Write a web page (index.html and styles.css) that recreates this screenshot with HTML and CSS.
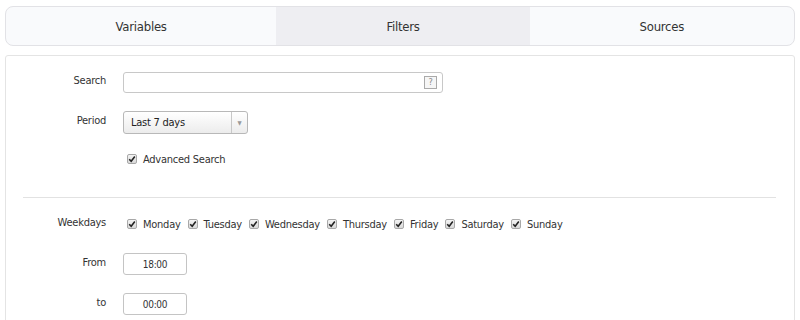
FILE: index.html
```html
<!DOCTYPE html>
<html lang="en">
<head>
    <meta charset="UTF-8">
    <title>Filters</title>
    <link rel="stylesheet" href="styles.css">
</head>
<body>
    <div class="tabs">
        <div class="tab tab-vars">Variables</div>
        <div class="tab tab-filters active">Filters</div>
        <div class="tab tab-sources">Sources</div>
    </div>
    <div class="panel">
        <div class="row">
            <label class="lbl">Search</label>
            <div class="search-box">
                <input type="text" class="search-input">
                <span class="help">?</span>
            </div>
        </div>
        <div class="row">
            <label class="lbl">Period</label>
            <div class="select">
                <span class="select-text">Last 7 days</span>
                <span class="select-arrow">&#9660;</span>
            </div>
        </div>
        <div class="row row-short">
            <span class="lbl"></span>
            <div class="days">
                <span class="check-item"><span class="cb"><svg width="8" height="8" viewBox="0 0 8 8"><path d="M1.2 4.2 L3.2 6.2 L6.8 1.6" fill="none" stroke="#222" stroke-width="1.6"/></svg></span>Advanced Search</span>
            </div>
        </div>
        <hr class="divider">
        <div class="row">
            <label class="lbl">Weekdays</label>
            <div class="days">
                <span class="check-item"><span class="cb"><svg width="8" height="8" viewBox="0 0 8 8"><path d="M1.2 4.2 L3.2 6.2 L6.8 1.6" fill="none" stroke="#222" stroke-width="1.6"/></svg></span>Monday</span>
                <span class="check-item"><span class="cb"><svg width="8" height="8" viewBox="0 0 8 8"><path d="M1.2 4.2 L3.2 6.2 L6.8 1.6" fill="none" stroke="#222" stroke-width="1.6"/></svg></span>Tuesday</span>
                <span class="check-item"><span class="cb"><svg width="8" height="8" viewBox="0 0 8 8"><path d="M1.2 4.2 L3.2 6.2 L6.8 1.6" fill="none" stroke="#222" stroke-width="1.6"/></svg></span>Wednesday</span>
                <span class="check-item"><span class="cb"><svg width="8" height="8" viewBox="0 0 8 8"><path d="M1.2 4.2 L3.2 6.2 L6.8 1.6" fill="none" stroke="#222" stroke-width="1.6"/></svg></span>Thursday</span>
                <span class="check-item"><span class="cb"><svg width="8" height="8" viewBox="0 0 8 8"><path d="M1.2 4.2 L3.2 6.2 L6.8 1.6" fill="none" stroke="#222" stroke-width="1.6"/></svg></span>Friday</span>
                <span class="check-item"><span class="cb"><svg width="8" height="8" viewBox="0 0 8 8"><path d="M1.2 4.2 L3.2 6.2 L6.8 1.6" fill="none" stroke="#222" stroke-width="1.6"/></svg></span>Saturday</span>
                <span class="check-item"><span class="cb"><svg width="8" height="8" viewBox="0 0 8 8"><path d="M1.2 4.2 L3.2 6.2 L6.8 1.6" fill="none" stroke="#222" stroke-width="1.6"/></svg></span>Sunday</span>
            </div>
        </div>
        <div class="row">
            <label class="lbl">From</label>
            <input type="text" class="time" value="18:00">
        </div>
        <div class="row">
            <label class="lbl">to</label>
            <input type="text" class="time" value="00:00">
        </div>
    </div>
</body>
</html>
```

FILE: styles.css
```css
body {
    margin: 0;
    padding: 6px 5px 0 5px;
    background: #fff;
    font-family: 'DejaVu Sans Condensed', 'Liberation Sans', sans-serif;
    letter-spacing: -0.25px;
    color: #333;
    overflow: hidden;
}
.tabs {
    display: flex;
    height: 38px;
    border: 1px solid #e2e2e6;
    border-radius: 8px;
    overflow: hidden;
    background: #f9fafc;
}
.tab {
    display: flex;
    align-items: center;
    justify-content: center;
    font-size: 13px;
    color: #333;
}
.tab-vars { flex: 271; }
.tab-filters { flex: 254; }
.tab-sources { flex: 265; }
.tab.active {
    background: #eeeef2;
}
.panel {
    margin-top: 9px;
    border: 1px solid #e4e4e4;
    border-radius: 3px;
    padding-top: 6px;
    height: 300px;
}
.row {
    display: flex;
    align-items: center;
    height: 40px;
}
.row-short {
    height: 34px;
}
.lbl {
    width: 100px;
    text-align: right;
    margin-right: 17px;
    padding-bottom: 4px;
    font-size: 11px;
    color: #333;
    flex-shrink: 0;
}
.search-box {
    position: relative;
    width: 320px;
    height: 21px;
}
.search-input {
    box-sizing: border-box;
    width: 100%;
    height: 100%;
    border: 1px solid #c8c8c8;
    border-radius: 3px;
    margin: 0;
    padding: 0 20px 0 4px;
}
.help {
    position: absolute;
    right: 6px;
    top: 4px;
    width: 11px;
    height: 11px;
    border: 1px solid #aaa;
    font-size: 9px;
    line-height: 11px;
    text-align: center;
    color: #888;
    background: #f6f6f6;
}
.select {
    box-sizing: border-box;
    display: flex;
    width: 125px;
    height: 23px;
    border: 1px solid #b8b8b8;
    border-radius: 3px;
    background: linear-gradient(#ffffff, #ececec);
}
.select-text {
    flex: 1;
    font-size: 11px;
    line-height: 21px;
    padding-left: 7px;
    color: #222;
}
.select-arrow {
    width: 15px;
    border-left: 1px solid #c8c8c8;
    font-size: 6px;
    line-height: 21px;
    text-align: center;
    color: #999;
}
.days {
    display: flex;
    gap: 7px;
    padding-left: 4px;
}
.check-item {
    display: inline-flex;
    align-items: center;
    font-size: 11px;
    color: #333;
}
.cb {
    box-sizing: border-box;
    display: inline-flex;
    align-items: center;
    justify-content: center;
    width: 10px;
    height: 10px;
    border: 1px solid #a8a8a8;
    border-radius: 2px;
    background: linear-gradient(#f4f4f4, #d8d8d8);
    margin-right: 6px;
}
.divider {
    border: 0;
    border-top: 1px solid #e2e2e2;
    margin: 21px 18px 6px 17px;
}
.time {
    box-sizing: border-box;
    width: 64px;
    height: 22px;
    border: 1px solid #c4c4c4;
    border-radius: 3px;
    margin: 0;
    text-align: center;
    font-family: inherit;
    font-size: 10px;
    letter-spacing: -0.3px;
    color: #333;
}
```
